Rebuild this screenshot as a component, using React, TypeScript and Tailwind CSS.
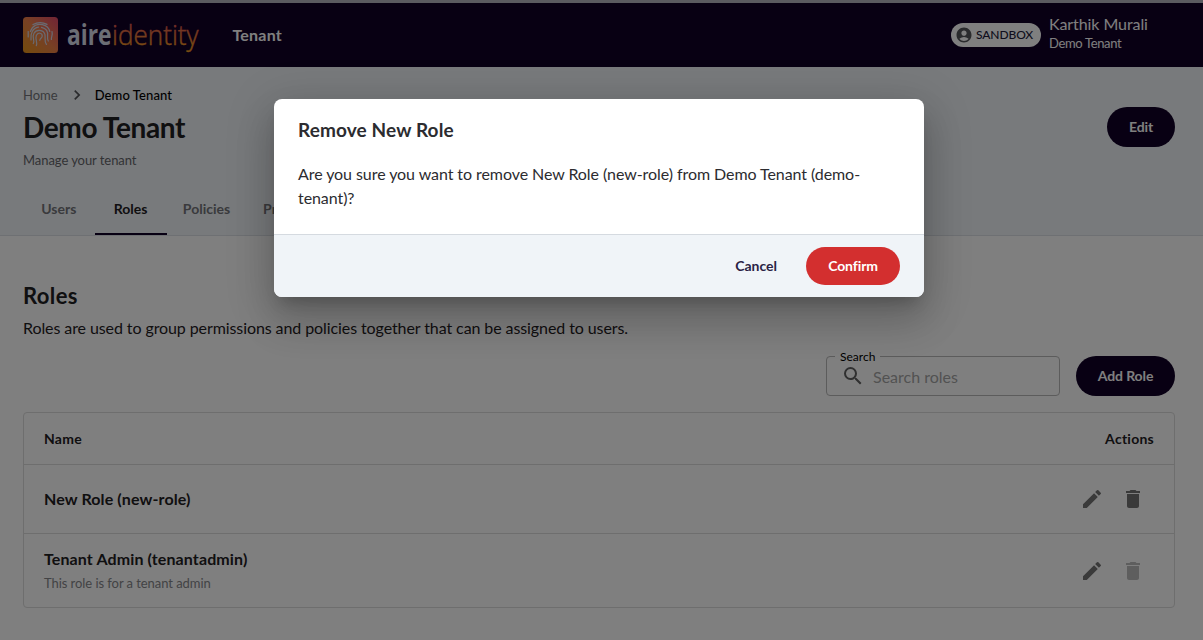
import React from "react";
import { MdAccountCircle, MdDelete, MdEdit, MdSearch, MdChevronRight } from "react-icons/md";

const tabs = [
  { label: "Users", width: "w-[71.5px]" },
  { label: "Roles", width: "w-[72px]" },
  { label: "Policies", width: "w-20" },
  { label: "Pr", width: "w-[47px]" },
];

const roles = [
  { name: "New Role (new-role)", note: "", locked: false, height: "h-[69px]" },
  { name: "Tenant Admin (tenantadmin)", note: "This role is for a tenant admin", locked: true, height: "h-[74px]" },
];

function Logo() {
  return (
    <svg viewBox="0 0 180 40" className="h-10 w-[180px] shrink-0" fill="none">
      <defs>
        <linearGradient id="tile" x1="0" y1="1" x2="1" y2="0">
          <stop offset="0" stopColor="#e8961a" />
          <stop offset="0.5" stopColor="#ee8148" />
          <stop offset="1" stopColor="#e2486c" />
        </linearGradient>
        <linearGradient id="word" gradientUnits="userSpaceOnUse" x1="0" y1="33" x2="0" y2="8">
          <stop offset="0" stopColor="#f09a22" />
          <stop offset="1" stopColor="#e25a56" />
        </linearGradient>
      </defs>
      <rect y="2" width="35" height="36" rx="3.5" fill="url(#tile)" />
      <g transform="translate(0 2)" stroke="#d3d6e6" strokeWidth="1.2" strokeLinecap="round">
        <path d="M10 7.6Q17 3.6 24 7.4" />
        <path d="M7.4 14.5C9.5 8 15 6.6 19.5 7.6C23.5 8.5 26 11 26.8 14.5" />
        <path d="M5.2 14.5V20" />
        <path d="M8 23C7.2 16.5 9.6 11 15.5 10.2" />
        <path d="M18.5 10.3C23.5 11.2 25.2 15 24.6 19.5Q24.3 22 25.3 24" />
        <path d="M29 14.5C30 18.5 28 20 28.4 22.5" />
        <path d="M10.3 26.5C12.3 23.5 8.5 20.5 11 16.2C13.5 11.8 20.5 12.6 21.9 17.4C22.6 21 21 24 23.4 27.4" />
        <path d="M13.3 28.6C15 25.8 11.8 22.5 13.3 18.5C15 14.8 19.6 16 19.2 19.2C18.9 21.4 17 21.2 16.8 23.3" />
      </g>
      <text
        x="44"
        y="30"
        textLength="44.5"
        lengthAdjust="spacingAndGlyphs"
        className="fill-[#d9dcea] font-['Open_Sans',sans-serif] text-[28px] font-bold"
      >
        aire
      </text>
      <text
        x="89"
        y="30"
        textLength="86.5"
        lengthAdjust="spacingAndGlyphs"
        fill="url(#word)"
        stroke="url(#word)"
        strokeWidth="0.4"
        className="font-['Open_Sans',sans-serif] text-[28px] font-light"
      >
        identity
      </text>
    </svg>
  );
}

function Pill({ children, className }: { children: React.ReactNode; className: string }) {
  return (
    <button
      className={`flex items-center justify-center rounded-full text-sm font-bold tracking-[-0.1px] text-white ${className}`}
    >
      {children}
    </button>
  );
}

export default function App() {
  return (
    <div className="relative h-[640px] w-full overflow-hidden bg-white font-['Lato',sans-serif] text-[#1f2023]">
      <div className="h-[3px] bg-[#b6b7c1]" />
      <header className="flex h-16 items-center bg-[#100026] pl-[23px] text-white">
        <Logo />
        <div className="ml-[29.5px] text-base font-bold tracking-[0.2px]">Tenant</div>
        <div className="ml-auto flex h-6 w-[90px] items-center rounded-full bg-white pl-1 text-[#221b3a]">
          <MdAccountCircle className="h-[18px] w-[18px] text-[#55565a]" />
          <span className="ml-[3px] text-xs font-medium tracking-[-0.1px]">SANDBOX</span>
        </div>
        <div className="mb-1 ml-2 w-[154px]">
          <div className="text-base leading-5 tracking-[-0.08px]">Karthik Murali</div>
          <div className="text-[13px] leading-[18px] tracking-[-0.35px]">Demo Tenant</div>
        </div>
      </header>

      <section className="flex h-[169px] flex-col border-b border-[#dde1e6] bg-[#f1f4f8] pr-7 pl-[23px]">
        <div className="flex h-[118px] justify-between">
          <div>
            <nav className="mt-[18px] flex h-5 items-center text-[13px]">
              <span className="pt-px text-[#74757a]">Home</span>
              <MdChevronRight className="mr-2 ml-[9px] h-5 w-5 text-[#55565a]" />
              <span className="pt-px font-medium tracking-[0.1px] text-black">Demo Tenant</span>
            </nav>
            <h1 className="mt-1 text-[28px] leading-9 font-bold tracking-[-0.35px]">Demo Tenant</h1>
            <p className="mt-[5px] text-[13px] leading-5 tracking-[-0.06px] text-[#65666b]">Manage your tenant</p>
          </div>
          <Pill className="mt-10 h-10 w-[68px] bg-[#100026]">Edit</Pill>
        </div>
        <div className="flex h-[50px] text-sm font-bold text-[#74757a]">
          {tabs.map(({ label, width }) => (
            <div
              key={label}
              className={`flex items-center justify-center ${width} ${
                label === "Roles" ? "border-b-2 border-[#100026] text-[#1f2023]" : "pb-0.5"
              }`}
            >
              {label}
            </div>
          ))}
        </div>
      </section>

      <main className="pr-7 pl-[23px]">
        <h2 className="pt-11 text-[22px] leading-8 font-bold tracking-[0.4px]">Roles</h2>
        <p className="mt-1 text-base leading-6 tracking-[-0.09px]">
          Roles are used to group permissions and policies together that can be assigned to users.
        </p>
        <div className="mt-4 flex justify-end gap-4">
          <fieldset className="-mt-[5px] flex h-[45px] w-[234px] items-center rounded border border-[#b8b8b8] pl-3.5">
            <legend className="-ml-1.5 px-[5px] pt-px text-xs leading-[10px] text-black">Search</legend>
            <div className="flex h-full items-center pb-1.5">
              <MdSearch className="h-6 w-6 text-[#606060]" />
              <span className="ml-2 pt-0.5 text-base text-[#a5a5a5]">Search roles</span>
            </div>
          </fieldset>
          <Pill className="h-10 w-[99px] bg-[#100026]">Add Role</Pill>
        </div>

        <div className="mt-4 rounded border border-[#dcdcdc]">
          <div className="flex h-[51px] items-center justify-between px-5 text-sm font-bold tracking-[0.25px]">
            <span>Name</span>
            <span>Actions</span>
          </div>
          {roles.map((role) => (
            <div key={role.name} className={`flex items-center border-t border-[#dcdcdc] pr-[29px] pl-5 ${role.height}`}>
              <div>
                <div className="text-base leading-6 font-bold tracking-[0.12px]">{role.name}</div>
                {role.note && <div className="text-[13px] leading-6 tracking-[-0.06px] text-[#85868a]">{role.note}</div>}
              </div>
              <MdEdit className="ml-auto h-6 w-6 text-[#757575]" />
              <MdDelete className={role.locked ? "ml-[17.5px] h-6 w-6 text-[#bdbdbd]" : "ml-[17.5px] h-6 w-6 text-[#757575]"} />
            </div>
          ))}
        </div>
      </main>

      <div className="absolute inset-0 bg-black/50 pt-[99px] pl-[274px]">
        <div
          role="dialog"
          className="flex h-[198px] w-[650px] flex-col overflow-hidden rounded-lg bg-white text-[#2c2c30] shadow-[0_11px_15px_-7px_rgba(0,0,0,0.2),0_24px_38px_3px_rgba(0,0,0,0.14),0_9px_46px_8px_rgba(0,0,0,0.12)]"
        >
          <div className="h-[135px] px-6 pt-4">
            <h3 className="text-[19px] leading-[30px] font-bold tracking-[0.12px]">Remove New Role</h3>
            <p className="mt-[17px] text-base leading-6 tracking-[-0.07px]">
              Are you sure you want to remove New Role (new-role) from Demo Tenant (demo-tenant)?
            </p>
          </div>
          <div className="flex flex-1 items-center justify-end border-t border-[#d5dae0] bg-[#f0f4f8] pr-6">
            <button className="mr-[29px] text-sm font-bold text-[#2b1f45]">Cancel</button>
            <Pill className="h-[38px] w-[94px] bg-[#d32f2f]">Confirm</Pill>
          </div>
        </div>
      </div>
    </div>
  );
}
